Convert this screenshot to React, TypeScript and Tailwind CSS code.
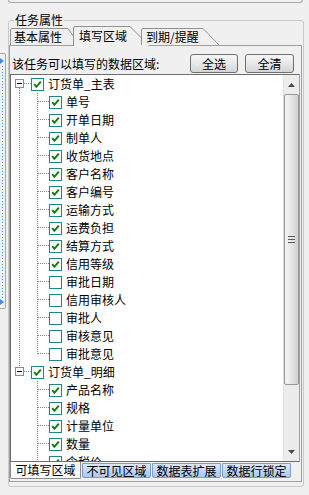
import React from 'react';

type Item = { label: string; checked: boolean };

const ROOTS: { label: string; last: boolean; children: Item[] }[] = [
  {
    label: '订货单_主表',
    last: false,
    children: [
      { label: '单号', checked: true },
      { label: '开单日期', checked: true },
      { label: '制单人', checked: true },
      { label: '收货地点', checked: true },
      { label: '客户名称', checked: true },
      { label: '客户编号', checked: true },
      { label: '运输方式', checked: true },
      { label: '运费负担', checked: true },
      { label: '结算方式', checked: true },
      { label: '信用等级', checked: true },
      { label: '审批日期', checked: false },
      { label: '信用审核人', checked: false },
      { label: '审批人', checked: false },
      { label: '审核意见', checked: false },
      { label: '审批意见', checked: false },
    ],
  },
  {
    label: '订货单_明细',
    last: true,
    children: [
      { label: '产品名称', checked: true },
      { label: '规格', checked: true },
      { label: '计量单位', checked: true },
      { label: '数量', checked: true },
      { label: '含税价', checked: true },
      { label: '金额', checked: true },
    ],
  },
];

const BOTTOM_TABS = ['可填写区域', '不可见区域', '数据表扩展', '数据行锁定'];

function CheckBox({ checked }: { checked: boolean }) {
  return (
    <div className="w-[13px] h-[13px] border border-[#1f8585] bg-white flex-shrink-0 flex items-center justify-center">
      {checked && (
        <svg width="11" height="11" viewBox="0 0 11 11">
          <path d="M2.2 5.2 L4.4 7.8 L8.8 2.6" fill="none" stroke="#0a7f0a" strokeWidth="2" />
        </svg>
      )}
    </div>
  );
}

function RootRow({ label, first, last }: { label: string; first: boolean; last: boolean }) {
  return (
    <div className="flex items-center h-[18px]">
      <svg width="20" height="18" className="flex-shrink-0">
        {!first && <line x1="8.5" y1="0" x2="8.5" y2="5" stroke="#808080" strokeDasharray="1 1" />}
        <rect x="4.5" y="4.5" width="8" height="8" fill="#fff" stroke="#8a8a8a" />
        <line x1="6" y1="8.5" x2="11" y2="8.5" stroke="#000" />
        <line x1="13" y1="8.5" x2="20" y2="8.5" stroke="#808080" strokeDasharray="1 1" />
        {!last && <line x1="8.5" y1="13" x2="8.5" y2="18" stroke="#808080" strokeDasharray="1 1" />}
        {/* line down to children */}
      </svg>
      <CheckBox checked />
      <span className="ml-[4px] leading-[18px] whitespace-nowrap">{label}</span>
    </div>
  );
}

function ChildRow({ item, parentLast, lastChild }: { item: Item; parentLast: boolean; lastChild: boolean }) {
  return (
    <div className="flex items-center h-[18px]">
      <svg width="38" height="18" className="flex-shrink-0">
        {!parentLast && <line x1="8.5" y1="0" x2="8.5" y2="18" stroke="#808080" strokeDasharray="1 1" />}
        <line x1="26.5" y1="0" x2="26.5" y2={lastChild ? 9 : 18} stroke="#808080" strokeDasharray="1 1" />
        <line x1="27" y1="8.5" x2="38" y2="8.5" stroke="#808080" strokeDasharray="1 1" />
      </svg>
      <CheckBox checked={item.checked} />
      <span className="ml-[4px] leading-[18px] whitespace-nowrap">{item.label}</span>
    </div>
  );
}

export default function App() {
  return (
    <div className="w-[309px] h-[495px] bg-[#f0f0f0] overflow-hidden text-[12px] text-black font-['Noto_Sans_CJK_SC',sans-serif]">
      {/* top panel edge */}
      <div className="ml-[8px] w-[295px] h-[3px] border-x border-b border-[#a9a9a9] rounded-b-[3px]" />

      <div className="flex">
        {/* left splitter strip */}
        <div className="mt-[50px] w-[6px] h-[256px] border-y border-r border-[#a8a8a8] rounded-r-[2px] flex flex-col items-start">
          <svg width="5" height="256" className="flex-shrink-0">
            <path d="M0 4 L4 7 L0 10 Z" fill="#3d8ee6" />
            <line x1="2.5" y1="12" x2="2.5" y2="244" stroke="#4a95ea" strokeDasharray="1 2" />
            <path d="M0 245 L4 248 L0 251 Z" fill="#3d8ee6" />
          </svg>
        </div>

        {/* group box */}
        <div className="relative ml-[2px] mt-[17px] w-[296px] h-[467px] border border-[#c9c9c9] rounded-[3px]">
          <span className="absolute left-[5px] top-[-10px] px-[1px] bg-[#f0f0f0] leading-[18px]">任务属性</span>

          {/* top tabs */}
          <div className="relative z-10 mt-[5px] h-[19px] flex items-start">
            <div className="relative ml-[1px] mt-[2px] w-[70px] h-[17px]">
              <svg width="70" height="17" className="absolute inset-0">
                <path d="M0.5 17 V2 Q0.5 0.5 2 0.5 H58 L69.5 17" fill="#f0f0f0" stroke="#919191" />
              </svg>
              <span className="relative block pl-[4px] leading-[17px]">基本属性</span>
            </div>
            <div className="relative -ml-[7px] w-[77px] h-[20px]">
              <svg width="77" height="20" className="absolute inset-0">
                <path d="M0.5 20 V2 Q0.5 0.5 2 0.5 H57 L76.5 20 Z" fill="#f0f0f0" stroke="none" />
                <path d="M0.5 20 V2 Q0.5 0.5 2 0.5 H57 L76.5 20" fill="none" stroke="#919191" />
              </svg>
              <span className="relative block pl-[6px] leading-[20px]">填写区域</span>
            </div>
            <div className="relative -ml-[9px] mt-[2px] w-[80px] h-[17px]">
              <svg width="80" height="17" className="absolute inset-0">
                <path d="M0.5 17 V2 Q0.5 0.5 2 0.5 H62 L78 17" fill="#f0f0f0" stroke="#919191" />
              </svg>
              <span className="relative block pl-[5px] leading-[17px]">到期/提醒</span>
            </div>
          </div>

          {/* tab sheet */}
          <div className="w-[293px] h-[437px] border border-[#a0a0a0] bg-[#f0f0f0] flex flex-col">
            <div className="mt-[8px] h-[19px] flex items-center">
              <span className="ml-[2px] leading-[19px]">该任务可以填写的数据区域:</span>
              <div className="flex-1" />
              <button className="w-[48px] h-[19px] border border-[#707070] rounded-[3px] bg-gradient-to-b from-[#f6f6f6] via-[#e8e8e8] to-[#d4d4d4] leading-[17px]">全选</button>
              <button className="ml-[7px] mr-[7px] w-[49px] h-[19px] border border-[#707070] rounded-[3px] bg-gradient-to-b from-[#f6f6f6] via-[#e8e8e8] to-[#d4d4d4] leading-[17px]">全清</button>
            </div>

            {/* tree */}
            <div className="mt-[1px] w-[290px] h-[388px] border border-[#6e6e6e] border-r-[#a0a0a0] bg-white flex overflow-hidden">
              <div className="flex-1 overflow-hidden">
                {ROOTS.map((r, ri) => (
                  <div key={r.label}>
                    <RootRow label={r.label} first={ri === 0} last={r.last} />
                    {r.children.map((c, ci) => (
                      <ChildRow key={c.label} item={c} parentLast={r.last} lastChild={ci === r.children.length - 1} />
                    ))}
                  </div>
                ))}
              </div>

              {/* scrollbar */}
              <div className="w-[16px] h-full bg-[#ececec] border-l border-[#e2e2e2] flex flex-col items-center">
                <div className="h-[19px] flex items-center justify-center">
                  <svg width="7" height="4"><path d="M0 4 L3.5 0 L7 4 Z" fill="#4a4a4a" /></svg>
                </div>
                <div className="w-[15px] h-[291px] border border-[#979797] rounded-[2px] bg-gradient-to-r from-[#f4f4f4] via-[#e6e6e6] to-[#cfcfcf] flex items-center justify-center">
                  <svg width="7" height="7">
                    <line x1="0" y1="0.5" x2="7" y2="0.5" stroke="#5a5a5a" />
                    <line x1="0" y1="3.5" x2="7" y2="3.5" stroke="#5a5a5a" />
                    <line x1="0" y1="6.5" x2="7" y2="6.5" stroke="#5a5a5a" />
                  </svg>
                </div>
                <div className="flex-1" />
                <div className="h-[19px] flex items-center justify-center">
                  <svg width="7" height="4"><path d="M0 0 L3.5 4 L7 0 Z" fill="#4a4a4a" /></svg>
                </div>
              </div>
            </div>

            {/* bottom tabs */}
            <div className="h-[18px] flex items-start">
              {BOTTOM_TABS.map((t, i) =>
                i === 0 ? (
                  <div key={t} className="w-[71px] h-[17px] bg-[#fbfbfb] border-x border-b border-[#8c8c8c] rounded-b-[2px] text-center leading-[16px]">
                    {t}
                  </div>
                ) : (
                  <div key={t} className="ml-[1px] mt-[1px] w-[69px] h-[15px] bg-gradient-to-b from-[#dbe8f8] to-[#a9c7ee] border border-[#7f9dc2] rounded-b-[2px] text-center leading-[13px]">
                    {t}
                  </div>
                )
              )}
            </div>
          </div>
        </div>
      </div>
    </div>
  );
}
